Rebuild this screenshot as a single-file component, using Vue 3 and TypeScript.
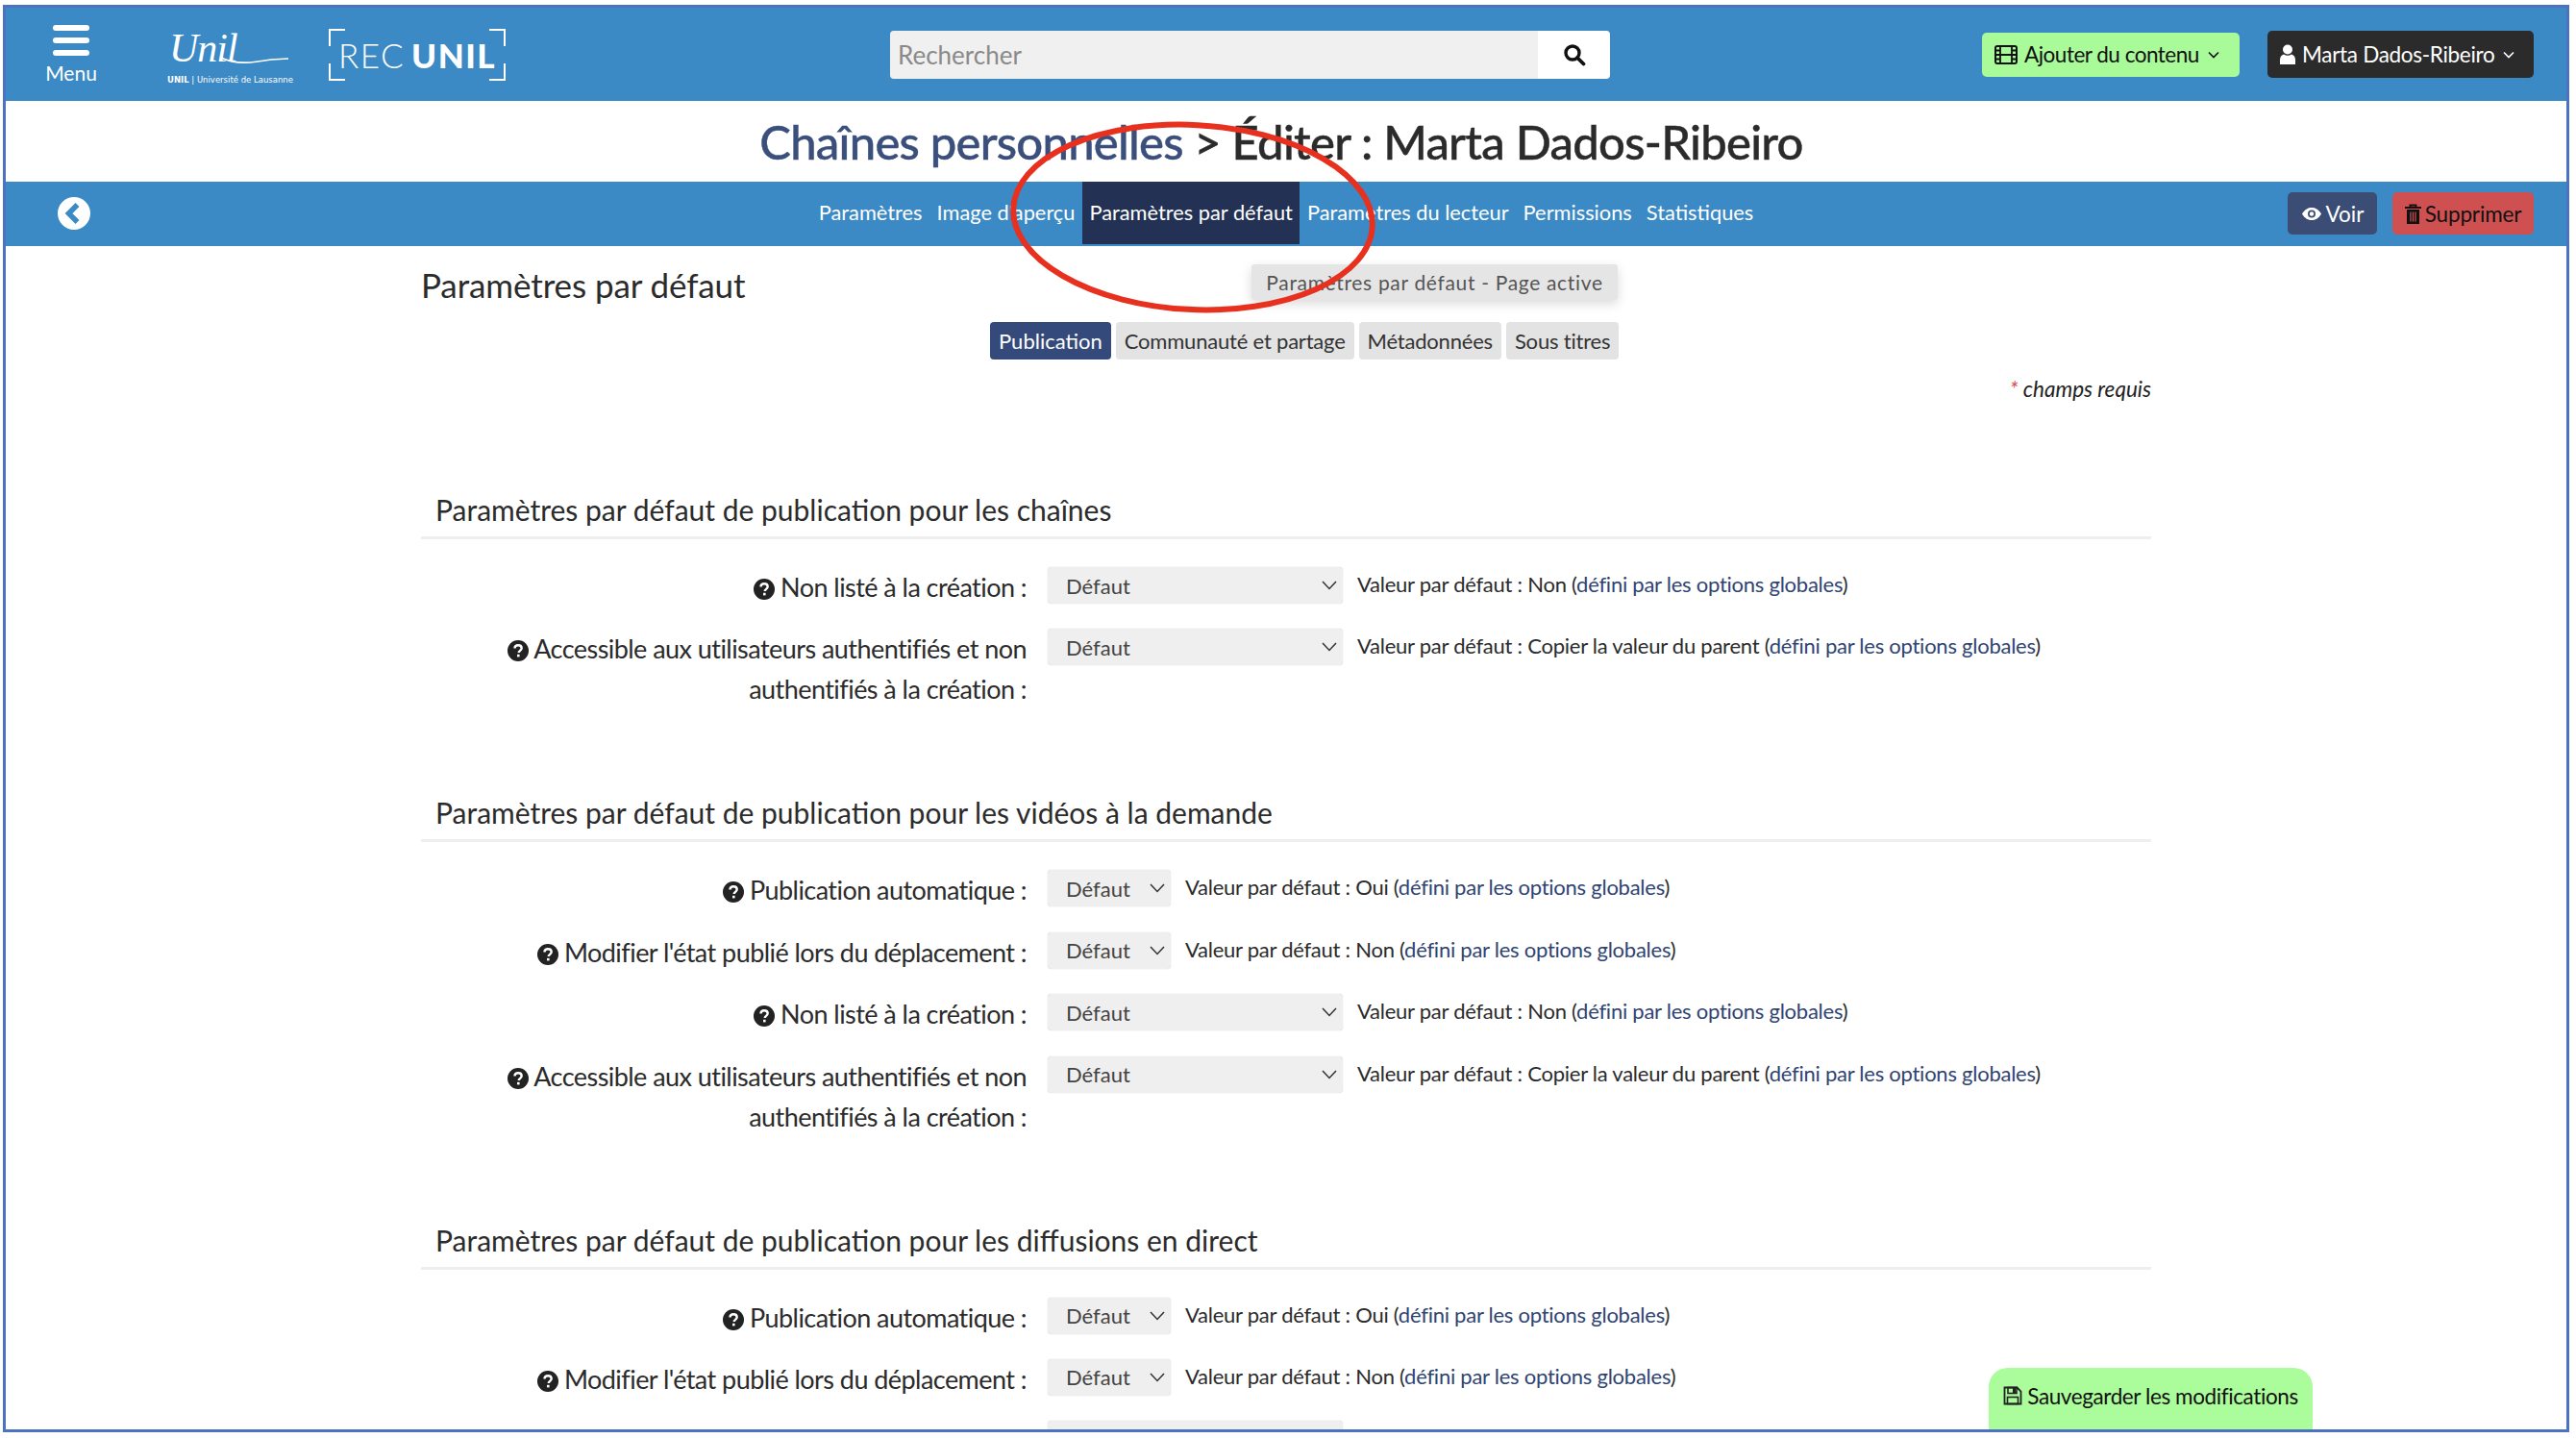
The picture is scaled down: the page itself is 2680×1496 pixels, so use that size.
<script setup lang="ts">
interface Row { label: string[]; wide: boolean; value: string }
interface Section { title: string; rows: Row[] }

const unlisted: Row = { label: ['Non listé à la création :'], wide: true, value: 'Non' }
const access: Row = {
  label: ['Accessible aux utilisateurs authentifiés et non', 'authentifiés à la création :'],
  wide: true,
  value: 'Copier la valeur du parent',
}
const auto: Row = { label: ['Publication automatique :'], wide: false, value: 'Oui' }
const moved: Row = { label: ["Modifier l'état publié lors du déplacement :"], wide: false, value: 'Non' }
const clipped: Row = { label: [], wide: true, value: '' }

const sections: Section[] = [
  { title: 'Paramètres par défaut de publication pour les chaînes', rows: [unlisted, access] },
  { title: 'Paramètres par défaut de publication pour les vidéos à la demande', rows: [auto, moved, unlisted, access] },
  { title: 'Paramètres par défaut de publication pour les diffusions en direct', rows: [auto, moved, clipped] },
]
const navItems = ['Paramètres', "Image d'aperçu", 'Paramètres par défaut', 'Paramètres du lecteur', 'Permissions', 'Statistiques']
const tabs = ['Publication', 'Communauté et partage', 'Métadonnées', 'Sous titres']
</script>

<template>
  <div class="frame">
    <header class="top">
      <div class="menu">
        <span class="bars"><i></i><i></i><i></i></span>
        <span class="menu-label">Menu</span>
      </div>
      <div class="unil">
        <svg class="unil-swoosh" viewBox="0 0 135 50" width="135" height="50">
          <text x="2" y="36" class="unil-script">Unil</text>
          <path d="M56 32 C72 40 90 37 108 34 L126 33" fill="none" stroke="#fff" stroke-width="1.6" />
        </svg>
        <span class="unil-sub"><b>UNIL</b> | Université de Lausanne</span>
      </div>
      <div class="rec">
        <i class="c tl"></i><i class="c tr"></i><i class="c bl"></i><i class="c br"></i>
        <span class="rec-thin">REC</span><span class="rec-bold">UNIL</span>
      </div>
      <div class="search">
        <span class="search-input">Rechercher</span>
        <span class="search-btn">
          <svg width="24" height="24" viewBox="0 0 24 24"><circle cx="10" cy="10" r="7" fill="none" stroke="#111" stroke-width="3.4" /><path d="M15 15l6.5 6.5" stroke="#111" stroke-width="3.8" stroke-linecap="round" /></svg>
        </span>
      </div>
      <div class="top-actions">
        <span class="btn-add">
          <svg width="24" height="20" viewBox="0 0 24 20"><rect x="1" y="1" width="22" height="18" rx="2" fill="none" stroke="#111" stroke-width="2" /><path d="M6 1v18M18 1v18M6 10h12M1 5.500h5M1 10h5M1 14.500h5M18 5.500h5M18 10h5M18 14.500h5" stroke="#111" stroke-width="1.800" fill="none" /></svg>
          Ajouter du contenu
          <svg class="chev" width="12" height="8" viewBox="0 0 12 8"><path d="M1 1.500l5 5 5-5" fill="none" stroke="currentColor" stroke-width="1.600" /></svg>
        </span>
        <span class="btn-user">
          <svg width="16" height="22" viewBox="0 0 16 22"><circle cx="8" cy="5.500" r="5" fill="#fff" /><path d="M0 21v-5c0-3 2-5 4-5.500 2.500 1.800 5.500 1.800 8 0 2 .5 4 2.500 4 5.500v5z" fill="#fff" /></svg>
          Marta Dados-Ribeiro
          <svg class="chev" width="12" height="8" viewBox="0 0 12 8"><path d="M1 1.500l5 5 5-5" fill="none" stroke="currentColor" stroke-width="1.600" /></svg>
        </span>
      </div>
    </header>

    <h1 class="page-title"><span class="crumb">Chaînes personnelles</span> &gt; Éditer : Marta Dados-Ribeiro</h1>

    <nav class="subnav">
      <span class="back">
        <svg width="34" height="34" viewBox="0 0 34 34"><circle cx="17" cy="17" r="17" fill="#fff" /><path d="M20.500 8l-9 9 9 9" fill="none" stroke="#3c8ac5" stroke-width="5.500" /></svg>
      </span>
      <div class="nav-items">
        <a v-for="item in navItems" :key="item" class="nav-item" :class="{ active: item === 'Paramètres par défaut' }">{{ item }}</a>
      </div>
      <div class="nav-actions">
        <span class="btn-view">
          <svg width="22" height="15" viewBox="0 0 22 15"><path d="M1 7.500C4 2.500 7.500 1 11 1s7 1.500 10 6.500C18 12.500 14.500 14 11 14S4 12.500 1 7.500z" fill="#fff" /><circle cx="11" cy="7.500" r="4" fill="#3b4d75" /><circle cx="11" cy="7.500" r="2.200" fill="#fff" /></svg>
          Voir
        </span>
        <span class="btn-del">
          <svg width="17" height="21" viewBox="0 0 17 21"><path d="M0 4h17M5.500 4V1.500h6V4" fill="none" stroke="#111" stroke-width="2" /><path d="M2 6h13v15H2z" fill="#111" /><path d="M6 8.500v10M8.500 8.500v10M11 8.500v10" stroke="#cf5050" stroke-width="1.200" /></svg>
          Supprimer
        </span>
      </div>
    </nav>

    <main class="content">
      <h2 class="content-title">Paramètres par défaut</h2>
      <div class="tabs">
        <span v-for="(tab, i) in tabs" :key="tab" class="tab" :class="{ on: i === 0 }">{{ tab }}</span>
      </div>
      <p class="required"><span class="star">*</span> champs requis</p>

      <section v-for="section in sections" :key="section.title" class="section">
        <h3 class="section-title">{{ section.title }}</h3>
        <div v-for="(row, r) in section.rows" :key="r" class="row">
          <div class="label">
            <div v-for="(line, l) in row.label" :key="l" class="label-line">
              <svg v-if="l === 0" class="help" width="22" height="22" viewBox="0 0 22 22"><circle cx="11" cy="11" r="11" fill="#222" /><path d="M7.500 8.500c0-2 1.500-3.300 3.600-3.300s3.600 1.300 3.600 3.100c0 2.600-3 2.500-3 4.700" fill="none" stroke="#fff" stroke-width="2.400" /><rect x="10" y="14.800" width="2.600" height="2.600" fill="#fff" /></svg>
              {{ line }}
            </div>
          </div>
          <span class="select" :class="{ wide: row.wide }">
            <template v-if="row.value">Défaut
            <svg width="16" height="10" viewBox="0 0 16 10"><path d="M1 1l7 7.500L15 1" fill="none" stroke="#333" stroke-width="1.500" /></svg></template>
          </span>
          <span v-if="row.value" class="hint">Valeur par défaut : {{ row.value }} (<a class="hint-link">défini par les options globales</a>)</span>
        </div>
      </section>
    </main>

    <div class="tooltip">Paramètres par défaut - Page active</div>
    <svg class="ring" width="400" height="210" viewBox="0 0 400 210">
      <ellipse cx="197" cy="105" rx="187" ry="96" transform="rotate(3 197 105)" fill="none" stroke="#e8301f" stroke-width="6" />
    </svg>
    <div class="save">
      <svg width="20" height="20" viewBox="0 0 20 20"><path d="M1.500 1.500h13l4 4v13h-17z" fill="none" stroke="#222" stroke-width="1.800" /><rect x="5" y="1.500" width="9" height="6" fill="none" stroke="#222" stroke-width="1.600" /><rect x="10" y="2" width="3" height="5" fill="#222" /><rect x="4.500" y="11.500" width="11" height="7" fill="none" stroke="#222" stroke-width="1.600" /></svg>
      Sauvegarder les modifications
    </div>
  </div>
</template>

<style>
html, body { margin: 0; background: #fff; }
</style>

<style scoped>
.frame {
  position: relative;
  box-sizing: border-box;
  width: 2670px;
  height: 1485px;
  margin: 5px 0 0 3px;
  border: 3px solid #4c72c2;
  overflow: hidden;
  background: #fff;
  font-family: Lato, "Open Sans", sans-serif;
  color: #222;
}
.top {
  display: flex;
  align-items: center;
  height: 97px;
  background: #3c8ac5;
  color: #fff;
}
.menu {
  width: 76px;
  margin-left: 30px;
  display: flex;
  flex-direction: column;
  align-items: center;
  gap: 6px;
}
.bars { display: flex; flex-direction: column; gap: 7px; }
.bars i { display: block; width: 38px; height: 6px; border-radius: 3px; background: #fff; }
.menu-label { font-size: 21px; line-height: 24px; }
.unil { display: flex; flex-direction: column; margin-left: 62px; width: 135px; margin-top: 2px; }
.unil-swoosh { display: block; }
.unil-script { font-family: "Liberation Serif", serif; font-style: italic; font-size: 42px; fill: #fff; letter-spacing: -1px; }
.unil-sub { font-size: 8.500px; line-height: 10px; white-space: nowrap; font-family: "DejaVu Sans", sans-serif; }
.rec {
  position: relative;
  box-sizing: border-box;
  width: 184px;
  height: 54px;
  margin-left: 33px;
  display: flex;
  align-items: center;
  justify-content: center;
  gap: 7px;
  font-size: 35px;
  letter-spacing: 1.500px;
}
.rec-thin { font-weight: 300; }
.rec-bold { font-weight: 900; }
.c { position: absolute; width: 15px; height: 16px; border: 0 solid #fff; }
.tl { top: 0; left: 0; border-width: 2px 0 0 2px; }
.tr { top: 0; right: 0; border-width: 2px 2px 0 0; }
.bl { bottom: 0; left: 0; border-width: 0 0 2px 2px; }
.br { bottom: 0; right: 0; border-width: 0 2px 2px 0; }
.search {
  display: flex;
  width: 749px;
  height: 50px;
  margin-left: 400px;
  border-radius: 4px;
  overflow: hidden;
}
.search-input {
  flex: 1;
  display: flex;
  align-items: center;
  padding-left: 8px;
  background: #f0f0f0;
  color: #8a8a8a;
  font-size: 26px;
}
.search-btn { width: 75px; display: flex; align-items: center; justify-content: center; background: #fff; }
.top-actions { display: flex; align-items: center; gap: 29px; margin-left: auto; margin-right: 34px; }
.btn-add, .btn-user {
  display: flex;
  align-items: center;
  gap: 7px;
  box-sizing: border-box;
  font-size: 22.500px;
  border-radius: 5px;
  white-space: nowrap;
}
.btn-add { width: 268px; height: 46px; padding-left: 13px; background: #a8fb98; color: #111; letter-spacing: -0.5px; }
.btn-user { width: 277px; height: 49px; padding-left: 13px; background: #2b2b2b; color: #fff; letter-spacing: -0.3px; }
.chev { margin-left: 2px; }
.page-title {
  margin: 0;
  height: 84px;
  padding-right: 10px;
  display: flex;
  align-items: center;
  justify-content: center;
  white-space: pre;
  font-size: 49px;
  font-weight: 500;
  letter-spacing: -0.75px;
  -webkit-text-stroke: 0.4px;
  color: #2b2b2b;
}
.crumb { color: #3a4f7c; }
.subnav {
  position: relative;
  display: flex;
  align-items: stretch;
  justify-content: center;
  height: 67px;
  background: #3c8ac5;
  color: #fff;
}
.back { position: absolute; top: 16px; left: 54px; display: flex; }
.nav-items { display: flex; }
.nav-item {
  display: flex;
  align-items: center;
  box-sizing: border-box;
  height: 65px;
  padding: 0 7.500px 2px;
  font-size: 21.800px;
  white-space: nowrap;
}
.nav-item.active { background: #233254; }
.nav-actions { position: absolute; right: 34px; top: 11px; display: flex; gap: 16px; }
.btn-view, .btn-del {
  display: flex;
  align-items: center;
  justify-content: center;
  gap: 4px;
  height: 44px;
  border-radius: 5px;
  font-size: 22.500px;
}
.btn-view { width: 93px; background: #3b4d75; color: #fff; }
.btn-del { width: 147px; background: #cf5050; color: #111; letter-spacing: -0.15px; }
.content { width: 1800px; margin-left: 432px; }
.content-title { margin: 14px 0 0; font-size: 35px; font-weight: 400; line-height: 52px; color: #2b2b2b; letter-spacing: -0.1px; }
.tabs { display: flex; gap: 5px; margin-top: 13px; padding-left: 592px; }
.tab {
  display: flex;
  align-items: center;
  height: 39px;
  padding: 0 9px;
  border-radius: 4px;
  background: #e3e3e3;
  color: #333;
  font-size: 22px;
  letter-spacing: -0.2px;
  white-space: nowrap;
}
.tab.on { background: #344a7a; color: #fff; letter-spacing: 0; }
.required { margin: 16px 0 0; text-align: right; font-style: italic; font-size: 22.500px; line-height: 30px; }
.star { color: #d9534f; }
.section-title {
  margin: 87px 0 29px;
  padding: 0 15px 8px;
  font-size: 30px;
  font-weight: 400;
  line-height: 40px;
  color: #2b2b2b;
  border-bottom: 3px solid #eee;
}
.section:first-of-type { margin-top: 90px; }
.section:first-of-type .section-title { margin-top: 0; }
.row {
  display: flex;
  align-items: flex-start;
  margin-bottom: 22.400px;
}
.label {
  flex: none;
  box-sizing: border-box;
  width: 630px;
  min-height: 42px;
  text-align: right;
  font-size: 27px;
  line-height: 42px;
  letter-spacing: -0.55px;
  color: #2b2b2b;
}
.label-line { white-space: nowrap; }
.help { vertical-align: -3px; }
.select {
  flex: none;
  box-sizing: border-box;
  display: flex;
  align-items: center;
  justify-content: space-between;
  width: 128px;
  height: 38px;
  margin-left: 22px;
  padding: 0 6px 0 19px;
  border-radius: 4px;
  background: #efefef;
  box-shadow: 0 0 1px #bbb;
  color: #444;
  font-size: 22px;
}
.select.wide { width: 307px; }
.hint { margin-left: 15px; font-size: 22px; line-height: 36px; letter-spacing: -0.25px; color: #2b2b2b; white-space: nowrap; }
.hint-link { color: #2f4472; }
.tooltip {
  position: absolute;
  left: 1296px;
  top: 267px;
  box-sizing: border-box;
  width: 381px;
  height: 37px;
  display: flex;
  align-items: center;
  justify-content: center;
  background: #e5e5e5;
  border-radius: 3px;
  box-shadow: 0 4px 12px rgba(0, 0, 0, 0.15);
  color: #555;
  font-size: 21px;
  letter-spacing: 0.67px;
}
.ring { position: absolute; left: 1038px; top: 113px; pointer-events: none; }
.save {
  position: absolute;
  left: 2063px;
  bottom: 0;
  box-sizing: border-box;
  width: 337px;
  height: 64px;
  padding-bottom: 6px;
  display: flex;
  align-items: center;
  justify-content: center;
  gap: 5px;
  background: #abfc9a;
  border-radius: 20px 20px 0 0;
  color: #111;
  font-size: 22.500px;
  letter-spacing: -0.4px;
}
</style>
